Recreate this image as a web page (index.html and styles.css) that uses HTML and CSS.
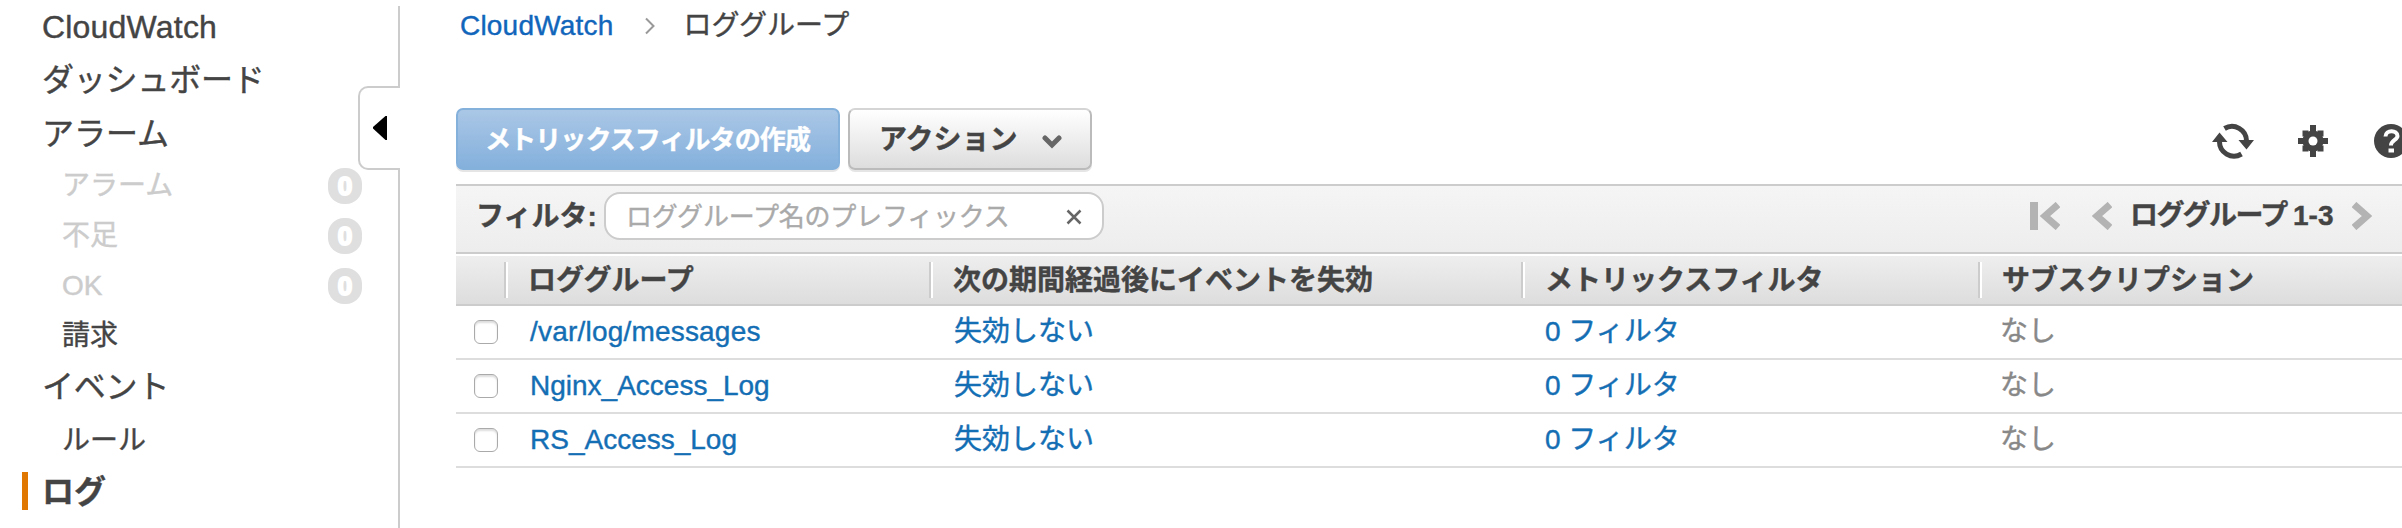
FILE: index.html
```html
<!DOCTYPE html>
<html lang="ja">
<head>
<meta charset="utf-8">
<title>CloudWatch</title>
<link rel="stylesheet" href="styles.css">
</head>
<body>
<div class="app">
  <nav class="sidebar">
    <a class="item title">CloudWatch</a>
    <a class="item tall">ダッシュボード</a>
    <a class="item alarm">アラーム</a>
    <a class="item sub off">アラーム<span class="badge">0</span></a>
    <a class="item sub off">不足<span class="badge">0</span></a>
    <a class="item sub off">OK<span class="badge">0</span></a>
    <a class="item sub">請求</a>
    <a class="item tall">イベント</a>
    <a class="item sub rule">ルール</a>
    <a class="item current">ログ</a>
    <div class="collapse"><svg width="14" height="24" viewBox="0 0 14 24"><path d="M14 0V24H12.500L0 12.500V11L12.500 0Z"/></svg></div>
  </nav>
  <main class="main">
    <div class="crumbs">
      <a class="link-top">CloudWatch</a>
      <svg class="crumb-arrow" width="12" height="18" viewBox="0 0 12 18"><path d="M2 1.500 9.500 9 2 16.500" fill="none" stroke="#999" stroke-width="2"/></svg>
      <span>ロググループ</span>
    </div>
    <div class="toolbar">
      <button class="btn primary"><span>メトリックスフィルタの作成</span></button>
      <button class="btn"><span>アクション</span><svg width="20" height="14" viewBox="0 0 20 14"><path d="M3 3 10 10 17 3" fill="none" stroke="#666" stroke-width="5" stroke-linecap="round"/></svg></button>
      <div class="tools">
        <svg width="42" height="38" viewBox="0 0 42 38" fill="none" stroke="#444" stroke-width="5"><path d="M12.500 6.500A14.500 14.500 0 0 1 34.500 19M29.500 32A14.500 14.500 0 0 1 7.500 19"/><path d="M26.500 18H42L34.500 27.500Z M0 20H15.500L7.500 10.500Z" fill="#444" stroke="none"/></svg>
        <svg class="gear" width="30" height="32" viewBox="0 0 30 32"><g fill="#444"><path d="M12 0h6v32h-6zM0 13h30v6H0z"/><path d="M4.500 5.500h6v6h-6zM19.500 5.500h6v6h-6zM4.500 20.500h6v6h-6zM19.500 20.500h6v6h-6z"/><circle cx="15" cy="16" r="10.500"/></g><circle cx="15" cy="16" r="4.500" fill="#fff"/></svg>
        <svg width="34" height="34" viewBox="0 0 34 34"><circle cx="17" cy="17" r="17" fill="#444"/><path d="M11.500 12.500C11.500 5.500 23.500 5.500 23.500 12C23.500 16 17 16 17 21.500" fill="none" stroke="#fff" stroke-width="4"/><path d="M14.500 24.500h5.500v4h-5.500z" fill="#fff"/></svg>
      </div>
    </div>
    <div class="filter">
      <label class="filter-label">フィルタ:</label>
      <div class="search"><span>ロググループ名のプレフィックス</span><svg width="16" height="16" viewBox="0 0 16 16"><path d="M1.500 1.500 14.500 14.500M14.500 1.500 1.500 14.500" stroke="#666" stroke-width="2.500"/></svg></div>
      <div class="pager">
        <svg class="first" width="30" height="28" viewBox="0 0 30 28"><path d="M0 0h8v28H0z" fill="#b3b3b3"/><path d="M28 2.500 15 14 28 25.500" fill="none" stroke="#b3b3b3" stroke-width="7"/></svg>
        <svg class="prev" width="20" height="28" viewBox="0 0 20 28"><path d="M18 2.500 5 14 18 25.500" fill="none" stroke="#b3b3b3" stroke-width="7"/></svg>
        <span>ロググループ <b class="range">1-3</b></span>
        <svg width="20" height="28" viewBox="0 0 20 28"><path d="M2 2.500 15 14 2 25.500" fill="none" stroke="#b3b3b3" stroke-width="7"/></svg>
      </div>
    </div>
    <div class="row head">
      <span></span><span class="name">ロググループ</span><span class="expire">次の期間経過後にイベントを失効</span><span class="metric">メトリックスフィルタ</span><span class="subs">サブスクリプション</span>
    </div>
    <div class="row">
      <i class="check"></i><a class="name path">/var/log/messages</a><a class="expire">失効しない</a><a class="metric">0 フィルタ</a><span class="subs">なし</span>
    </div>
    <div class="row">
      <i class="check"></i><a class="name">Nginx_Access_Log</a><a class="expire">失効しない</a><a class="metric">0 フィルタ</a><span class="subs">なし</span>
    </div>
    <div class="row">
      <i class="check"></i><a class="name">RS_Access_Log</a><a class="expire">失効しない</a><a class="metric">0 フィルタ</a><span class="subs">なし</span>
    </div>
  </main>
</div>
</body>
</html>
```

FILE: styles.css
```css
* { box-sizing: border-box; }
body {
  margin: 0;
  background: #fff;
  color: #444;
  font: 28px/40px "Liberation Sans", "Noto Sans CJK JP", sans-serif;
  overflow: hidden;
}
svg { display: block; flex: none; }
.app { display: flex; width: 2402px; height: 528px; overflow: hidden; -webkit-text-stroke: 0.4px currentColor; }

/* Sidebar */
.sidebar { position: relative; flex: none; width: 400px; padding-top: 1px; background: linear-gradient(#ccc, #ccc) right 6px / 2px 528px no-repeat; }
.item { display: flex; align-items: center; height: 52px; padding-left: 42px; font-size: 32px; white-space: nowrap; }
.title { letter-spacing: 0.2px; }
.tall { height: 54px; letter-spacing: -0.2px; }
.alarm { height: 53px; }
.sub { height: 50px; padding: 2px 38px 0 62px; font-size: 28px; }
.rule { height: 52px; }
.off { color: #ccc; justify-content: space-between; }
.badge { width: 34px; height: 36px; border-radius: 16px; background: #dfdfdf; color: #fff; font-size: 26px; font-weight: bold; line-height: 37px; text-align: center; -webkit-text-stroke: 2px #fff; }
.current { font-weight: bold; position: relative; }
.current::before { content: ""; position: absolute; left: 22px; top: 6px; width: 6px; height: 38px; background: #e07700; }
.collapse { position: absolute; left: 358px; top: 86px; width: 42px; height: 84px; border: 2px solid #ccc; border-right: 0; border-radius: 10px 0 0 10px; background: #fff; display: flex; align-items: center; padding-left: 13px; }

/* Main column */
.main { flex: none; width: 1946px; margin-left: 56px; }
.crumbs { display: flex; align-items: center; height: 52px; padding-left: 4px; }
.crumb-arrow { margin: 0 27px 0 31px; }
.link-top { color: #1166bb; letter-spacing: 0.2px; }
.toolbar { display: flex; height: 132px; padding-top: 56px; }
.btn { display: flex; flex: none; align-items: center; width: 244px; height: 62px; padding: 1px 0 0 29px; border: 2px solid #bbb; border-top-color: #d5d5d5; border-radius: 7px; background: linear-gradient(#fff, #ddd); box-shadow: 0 2px 0 #e5e5e5; color: #444; font: bold 28px/40px "Liberation Sans", "Noto Sans CJK JP", sans-serif; white-space: nowrap; }
.btn svg { margin: 4px 0 0 24px; }
.primary { width: 384px; margin-right: 8px; padding-left: 27px; border-color: #84b0dc; background: linear-gradient(#aac7e6, #84b0dc); color: #fff; font-size: 26px; letter-spacing: -0.900px; -webkit-text-stroke: 0.4px #fff; }
.tools { display: flex; flex: none; align-items: center; height: 62px; margin-left: 1120px; padding-top: 3px; }
.gear { margin: 0 46px 0 44px; }
.filter { display: flex; align-items: center; height: 70px; padding: 0 0 6px 20px; border-top: 2px solid #ccc; border-bottom: 2px solid #ccc; background: linear-gradient(#f5f5f5, #ededed); white-space: nowrap; }
.filter-label { width: 128px; padding-top: 2px; font-weight: bold; }
.search { display: flex; align-items: center; justify-content: space-between; width: 500px; height: 48px; border: 2px solid #ccc; border-radius: 16px; padding: 2px 20px 0 20px; background: #fff; color: #aaa; font-size: 26px; letter-spacing: -0.200px; }
.pager { display: flex; align-items: center; margin-left: 926px; font-weight: bold; }
.prev { margin: 0 18px 0 32px; }
.pager span { width: 222px; letter-spacing: -1.500px; }
.range { letter-spacing: 0; }
.row { display: grid; grid-template-columns: 48px 425px 592px 457px 1fr; align-items: center; height: 54px; border-bottom: 2px solid #ddd; white-space: nowrap; color: #888; }
.row a { color: #146eb4; }
.name { padding-left: 26px; }
.path { letter-spacing: 0.2px; }
.expire { padding-left: 25px; }
.metric { padding-left: 24px; }
.subs { padding-left: 22px; }
.check { width: 24px; height: 24px; margin-left: 18px; border: 1.500px solid #aaa; border-radius: 6px; box-shadow: inset 0 2px 2px #ddd; }
.head { height: 50px; margin-top: 2px; border-color: #ccc; background: linear-gradient(#eee, #ddd); color: #444; font-weight: bold; }
.head span { height: 36px; line-height: 37px; }
.head .name, .head .expire, .head .metric, .head .subs { border-left: 2px solid #ccc; box-shadow: inset 2px 0 0 #fff; padding-left: 22px; }
```
